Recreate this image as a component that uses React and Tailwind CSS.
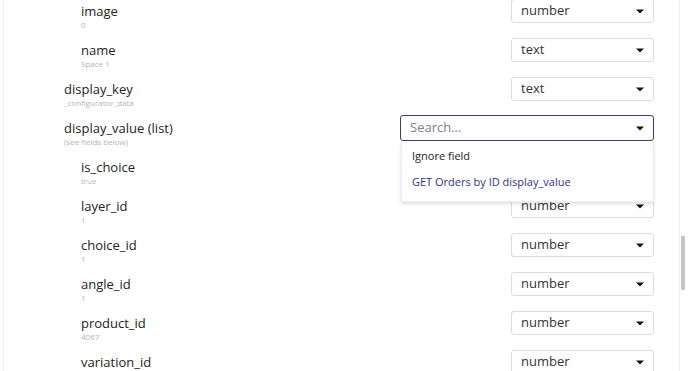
import React from "react";

const rows = [
  { name: "image", sub: "0", type: "number", depth: 1 },
  { name: "name", sub: "Space 1", type: "text", depth: 1 },
  { name: "display_key", sub: "_configurator_data", type: "text", depth: 0 },
  { name: "display_value (list)", sub: "(see fields below)", type: null, depth: 0, search: true },
  { name: "is_choice", sub: "true", type: "number", depth: 1 },
  { name: "layer_id", sub: "1", type: "number", depth: 1 },
  { name: "choice_id", sub: "1", type: "number", depth: 1 },
  { name: "angle_id", sub: "1", type: "number", depth: 1 },
  { name: "product_id", sub: "4067", type: "number", depth: 1 },
  { name: "variation_id", sub: "", type: "number", depth: 1 },
];

function Caret() {
  return (
    <svg width="8" height="5" viewBox="0 0 8 5" className="shrink-0">
      <path d="M0 0.5 H8 L4 4.5 Z" fill="#111" />
    </svg>
  );
}

function Select({ value }) {
  return (
    <div className="w-[143px] h-[24px] border border-[#dcdcdc] rounded-[3px] bg-white flex items-center justify-between pl-[9px] pr-[9px] text-[13px] text-[#333]">
      <span>{value}</span>
      <Caret />
    </div>
  );
}

function SearchSelect() {
  return (
    <div className="relative w-[254px] -mt-[1px]">
      <div className="h-[26px] border-[1.5px] border-[#3d3a78] rounded-[3px] bg-white flex items-center justify-between pl-[9px] pr-[9px] text-[13px] text-[#808080]">
        <span>Search...</span>
        <Caret />
      </div>
      <div className="absolute z-10 left-[1px] right-0 top-[26px] h-[61px] bg-white border border-t-0 border-[#ececec] shadow-[0_2px_4px_rgba(0,0,0,0.12)] pl-[10px] pt-[7px] text-[11px]">
        <div className="h-[26px] text-[#222]">Ignore field</div>
        <div className="text-[#2e3192]">GET Orders by ID display_value</div>
      </div>
    </div>
  );
}

export default function App() {
  return (
    <div className="w-[690px] h-[371px] overflow-hidden bg-white flex font-['Open_Sans',sans-serif]">
      <div className="ml-[3px] w-[677px] border-l border-r border-[#eeeeee]">
        <div className="-mt-[1px]">
          {rows.map((r) => (
            <div key={r.name} className="h-[39px] flex justify-between items-start pr-[25px]">
              <div className={r.depth ? "pl-[77px]" : "pl-[60px]"}>
                <div className="text-[13px] leading-[14px] pt-[5px] text-[#222]">{r.name}</div>
                <div className="text-[8px] leading-[10px] mt-[2px] text-[#b4b4b4]">{r.sub}</div>
              </div>
              {r.search ? <SearchSelect /> : <Select value={r.type} />}
            </div>
          ))}
        </div>
      </div>
      <div className="w-[10px] flex flex-col pt-[236px] pl-[1px]">
        <div className="w-[4px] h-[54px] bg-[#c4c4c4] rounded-[1px]" />
      </div>
    </div>
  );
}
